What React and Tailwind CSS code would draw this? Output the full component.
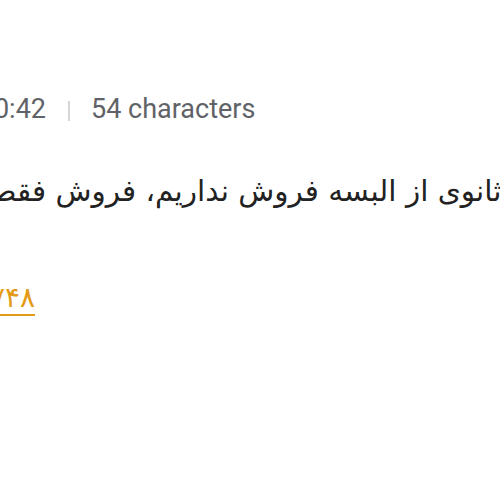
export default function App() {
  return (
    <div className="w-[500px] h-[500px] overflow-hidden bg-white flex justify-center">
      <div className="w-[522px] shrink-0 pt-[92px] flex flex-col">
        <div
          className="flex items-center whitespace-nowrap text-[27px] leading-[34px] text-[#5f6368]"
          style={{ fontFamily: "Roboto, 'Liberation Sans', sans-serif" }}
        >
          <div className="w-[57px] shrink-0 flex justify-end">
            <span className="shrink-0">Today 10:42</span>
          </div>
          <div className="ml-[22px] mr-[21px] w-[2px] h-[20px] mt-[4px] bg-[#d5d5d5]" />
          <span>54 characters</span>
        </div>
        <div className="mt-[46px] flex">
          <p
            className="shrink-0 whitespace-nowrap text-[29.5px] leading-[38px] text-[#222222]"
            style={{ fontFamily: "'DejaVu Sans', sans-serif" }}
          >
            سلام، ما فروش ثانوی از البسه فروش نداریم، فروش فقط
          </p>
        </div>
        <div className="mt-[70px] flex">
          <div className="w-[46px] shrink-0 flex justify-end">
            <a
              href="#"
              className="shrink-0 whitespace-nowrap text-[28px] leading-[36px] text-[#e39b16] underline underline-offset-[7px] decoration-[2px]"
              style={{ fontFamily: "'DejaVu Sans', sans-serif" }}
            >
              ۰۹۱۲۳۴۵۶۷۴۸
            </a>
          </div>
        </div>
      </div>
    </div>
  );
}
